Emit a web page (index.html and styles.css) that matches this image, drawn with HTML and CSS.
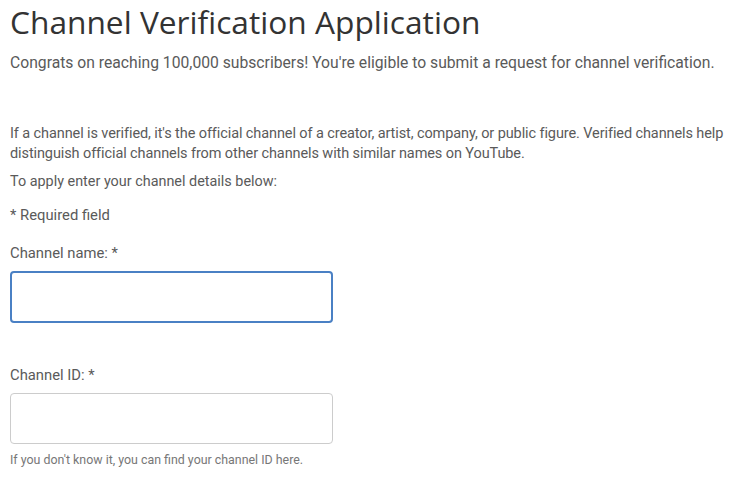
FILE: index.html
```html
<!doctype html>
<html lang="en">
    <head>
        <meta charset="UTF-8" />
        <meta name="viewport" content="width=device-width, initial-scale=1.0" />
        <title>Channel Verification Application</title>
        <link rel="stylesheet" href="styles.css">
    </head>
    <body>
        <div class="page">
            <h1 class="title">Channel Verification Application</h1>
            <p class="intro">Congrats on reaching 100,000 subscribers! You're eligible to submit a request for channel verification.</p>

            <p class="about">If a channel is verified, it's the official channel of a creator, artist, company, or public figure. Verified channels help distinguish official channels from other channels with similar names on YouTube.</p>
            <p class="apply">To apply enter your channel details below:</p>
            <p class="required">* Required field</p>

            <div class="field">
                <label for="channel-name">Channel name: *</label>
                <input type="text" id="channel-name" class="focused" />
            </div>

            <div class="field field-id">
                <label for="channel-id">Channel ID: *</label>
                <input type="text" id="channel-id" />
                <p class="hint">If you don't know it, you can find your channel ID here.</p>
            </div>
        </div>
    </body>
</html>
```

FILE: styles.css
```css
body {
    font-family: Roboto, "Liberation Sans", sans-serif;
    margin: 0;
    padding: 0;
    background-color: #fff;
    color: #5a5a5a;
}

.page {
    padding: 0 10px;
}

.title {
    font-family: "Open Sans", Roboto, sans-serif;
    font-weight: 400;
    font-size: 31.7px;
    line-height: 44px;
    color: #333;
    margin: 0;
}

p {
    margin: 0;
}

.intro {
    font-size: 15.7px;
    line-height: 20px;
    margin-top: 9px;
}

.about {
    font-size: 14.5px;
    line-height: 20px;
    margin-top: 51px;
    letter-spacing: -0.1px;
}

.apply {
    font-size: 14.4px;
    line-height: 20px;
    margin-top: 8px;
}

.required {
    font-size: 14.8px;
    line-height: 20px;
    margin-top: 13px;
}

.field {
    margin-top: 18px;
}

.field label {
    display: block;
    font-size: 14.8px;
    line-height: 20px;
    margin-bottom: 8px;
}

.field input {
    display: block;
    box-sizing: border-box;
    width: 323px;
    height: 51px;
    border: 1px solid #ccc;
    border-radius: 4px;
    background: #fff;
    outline: none;
}

.field input.focused {
    height: 52px;
    border: 2px solid #4a80c4;
}

.field-id {
    margin-top: 42px;
}

.hint {
    font-size: 12.4px;
    line-height: 16px;
    color: #777;
    margin-top: 8px;
}
```
